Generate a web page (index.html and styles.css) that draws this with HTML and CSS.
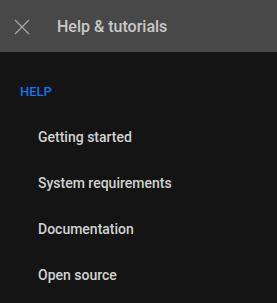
FILE: index.html
```html
<!DOCTYPE html>
<html>
<head>
    <title>Help & tutorials</title>
    <link rel="stylesheet" href="styles.css">
</head>
<body>
    <div class="panel">
        <div class="header">
            <button class="close-btn" aria-label="Close">
                <svg width="16" height="16" viewBox="0 0 16 16">
                    <path d="M1 1 L15 15 M15 1 L1 15" stroke="#a8a8a8" stroke-width="1.2" fill="none"/>
                </svg>
            </button>
            <h2>Help &amp; tutorials</h2>
        </div>

        <div class="section">
            <h3>HELP</h3>
            <ul class="menu">
                <li>Getting started</li>
                <li>System requirements</li>
                <li>Documentation</li>
                <li>Open source</li>
            </ul>
        </div>
    </div>
</body>
</html>
```

FILE: styles.css
```css
body {
    margin: 0;
    width: 277px;
    height: 303px;
    background-color: #141414;
    font-family: Roboto, "Liberation Sans", sans-serif;
    overflow: hidden;
}
.panel {
    display: flex;
    flex-direction: column;
}
.header {
    display: flex;
    align-items: center;
    height: 52px;
    background-color: #484848;
    padding-left: 14px;
}
.close-btn {
    background: none;
    border: none;
    padding: 0;
    width: 16px;
    height: 16px;
    margin-right: 27px;
    margin-top: 1px;
    cursor: pointer;
}
.close-btn svg {
    display: block;
}
h2 {
    margin: 0;
    font-size: 16px;
    font-weight: 500;
    color: #c8c8c8;
}
.section {
    padding: 32px 0 0 20px;
}
h3 {
    margin: 0;
    font-size: 13px;
    font-weight: 500;
    color: #1a73e8;
}
.menu {
    list-style: none;
    margin: 0;
    padding: 0 0 0 18px;
}
.menu li {
    font-size: 14px;
    font-weight: 500;
    color: #d2d2d2;
    height: 46px;
    line-height: 46px;
}
.menu li:first-child {
    margin-top: 15px;
}
```
